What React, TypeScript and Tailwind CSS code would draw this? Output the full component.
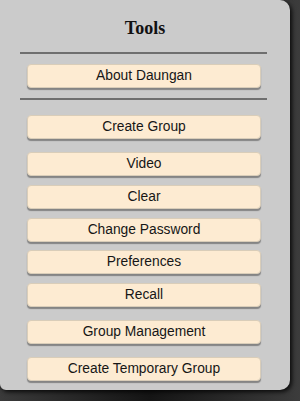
const items = [
  { label: "Create Group", gap: "mt-[15px]" },
  { label: "Video", gap: "mt-[13px]" },
  { label: "Clear", gap: "mt-[9px]" },
  { label: "Change Password", gap: "mt-[9px]" },
  { label: "Preferences", gap: "mt-[8px]" },
  { label: "Recall", gap: "mt-[9px]" },
  { label: "Group Management", gap: "mt-[13px]" },
  { label: "Create Temporary Group", gap: "mt-[13px]" },
];

function ToolButton({ label, className = "" }: { label: string; className?: string }) {
  return (
    <button
      className={`ml-[27px] flex h-[24px] w-[234px] items-center justify-center rounded-[4px] border border-[#d9cdb9] bg-[#fdebd2] text-[13.8px] text-[#161616] shadow-[0_2px_1px_rgba(0,0,0,0.35)] ${className}`}
    >
      {label}
    </button>
  );
}

function Divider({ className = "" }: { className?: string }) {
  return <div className={`ml-[20px] h-[2px] w-[247px] bg-[#6f6f6f] ${className}`} />;
}

export default function App() {
  return (
    <div className="h-[401px] w-[300px] overflow-hidden bg-gradient-to-r from-[#3a3a3a] via-[#151515] to-[#3c3c3c]">
      <div
        className="flex h-[390px] w-[290px] flex-col rounded-r-[10px] rounded-bl-[6px] bg-[#cbcbcb] shadow-[2px_2px_4px_rgba(0,0,0,0.8)]"
        style={{ fontFamily: '"Liberation Sans", Arial, sans-serif' }}
      >
        {/* Header */}
        <div
          className="pt-[18px] text-center text-[18px] font-semibold leading-[20px] text-[#111]"
          style={{ fontFamily: '"Liberation Serif", "DejaVu Serif", serif' }}
        >
          Tools
        </div>
        <Divider className="mt-[14px]" />
        <ToolButton label="About Daungan" className="mt-[10px]" />
        <Divider className="mt-[10px]" />

        {/* Tools list */}
        {items.map((it) => (
          <ToolButton key={it.label} label={it.label} className={it.gap} />
        ))}
      </div>
    </div>
  );
}
